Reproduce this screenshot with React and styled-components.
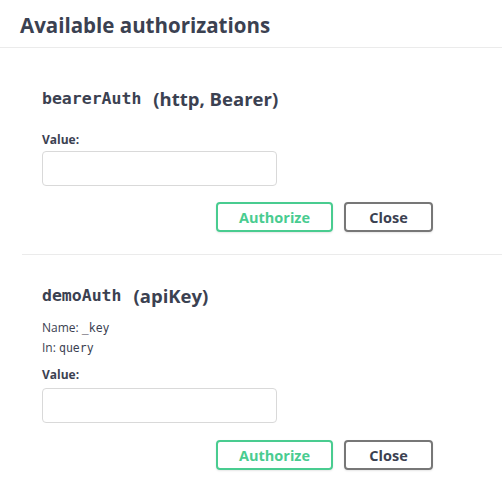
import React from "react";
import styled, { createGlobalStyle } from "styled-components";

const GlobalStyle = createGlobalStyle`
  body {
    margin: 0;
    background: #ffffff;
    font-family: "Open Sans", "Noto Sans", sans-serif;
    color: #3b4151;
    overflow: hidden;
  }
`;

const Modal = styled.div`
  width: 502px;
`;

const Header = styled.div`
  height: 47px;
  padding: 0 20px;
  display: flex;
  align-items: center;
  border-bottom: 1px solid #ebebeb;
`;

const Title = styled.h3`
  margin: 2px 0 0;
  font-size: 20.5px;
  font-weight: 700;
  color: #3b4151;
`;

const Content = styled.div`
  padding: 10px 0 0 22px;
`;

const AuthBlock = styled.div`
  padding: 20px 20px 22px;
  border-bottom: ${(p) => (p.$last ? "none" : "1px solid #ebebeb")};
`;

const Heading = styled.h4`
  margin: 8px 0 0;
  height: 24px;
  display: flex;
  align-items: center;
  font-size: 18.5px;
  font-weight: 700;
  color: #3b4151;
`;

const Code = styled.code`
  font-family: "DejaVu Sans Mono", monospace;
  font-size: 16.5px;
  font-weight: 700;
  margin-right: 12px;
`;

const Info = styled.p`
  margin: ${(p) => p.$top}px 0 0;
  font-size: 12px;
  line-height: 16px;
  color: #3b4151;
`;

const InlineCode = styled.code`
  font-family: "DejaVu Sans Mono", monospace;
  font-size: 11.5px;
`;

const Label = styled.label`
  display: block;
  margin-top: ${(p) => p.$top}px;
  font-size: 12px;
  line-height: 16px;
  font-weight: 700;
  color: #3b4151;
`;

const Input = styled.input`
  display: block;
  box-sizing: border-box;
  margin-top: ${(p) => p.$top}px;
  width: 235px;
  height: 35px;
  border: 1px solid #d9d9d9;
  border-radius: 4px;
  background: #fff;
  outline: none;
`;

const ButtonRow = styled.div`
  display: flex;
  gap: 11px;
  margin-top: ${(p) => p.$top}px;
  padding-left: 174px;
`;

const Button = styled.button`
  box-sizing: border-box;
  height: 30px;
  width: ${(p) => p.$width}px;
  border: 2px solid ${(p) => (p.$primary ? "#49cc90" : "#777777")};
  border-radius: 4px;
  background: transparent;
  color: ${(p) => (p.$primary ? "#49cc90" : "#3b4151")};
  font-family: "Open Sans", sans-serif;
  font-size: 14.5px;
  font-weight: 700;
  padding: 0;
  box-shadow: 0 1px 2px rgba(0, 0, 0, 0.1);
`;

const Buttons = ({ top }) => (
  <ButtonRow $top={top}>
    <Button $primary $width={117}>Authorize</Button>
    <Button $width={89}>Close</Button>
  </ButtonRow>
);

export default function App() {
  return (
    <Modal>
      <GlobalStyle />
      <Header>
        <Title>Available authorizations</Title>
      </Header>
      <Content>
        <AuthBlock>
          <Heading>
            <Code>bearerAuth</Code>(http, Bearer)
          </Heading>
          <Label $top={22}>Value:</Label>
          <Input $top={3} />
          <Buttons top={16} />
        </AuthBlock>
        <AuthBlock $last>
          <Heading>
            <Code>demoAuth</Code>(apiKey)
          </Heading>
          <Info $top={13}>
            Name: <InlineCode>_key</InlineCode>
          </Info>
          <Info $top={4}>
            In: <InlineCode>query</InlineCode>
          </Info>
          <Label $top={11}>Value:</Label>
          <Input $top={5} />
          <Buttons top={17} />
        </AuthBlock>
      </Content>
    </Modal>
  );
}
